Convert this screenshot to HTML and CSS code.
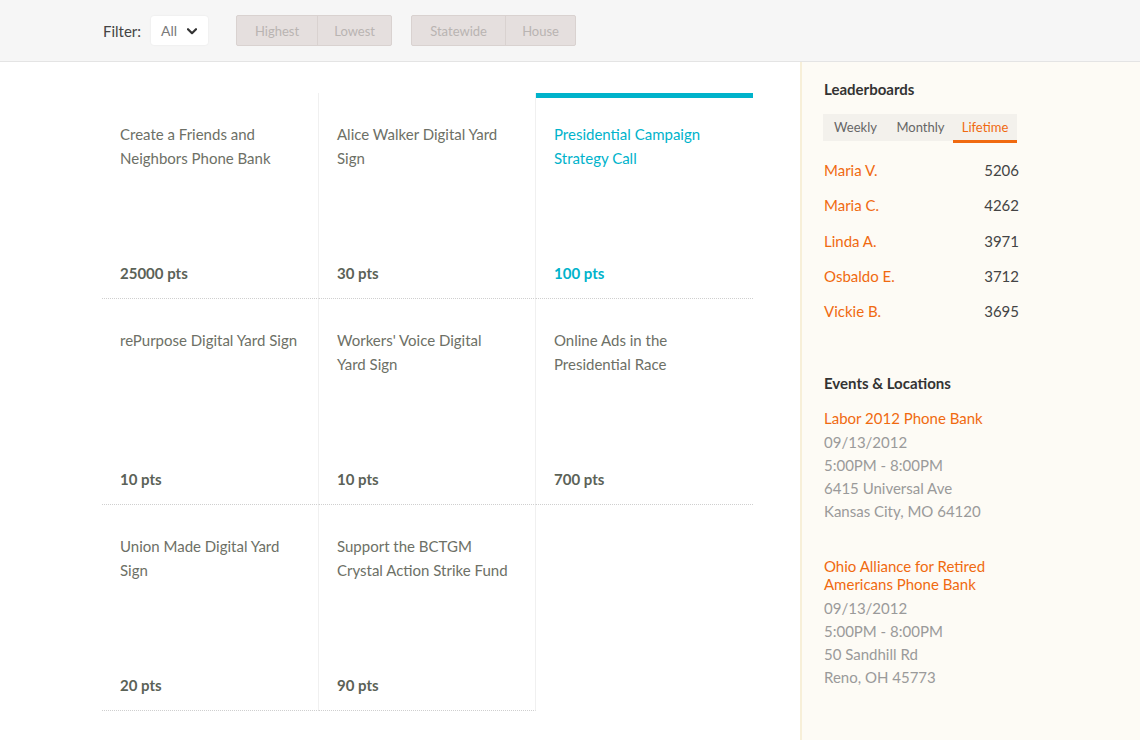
FILE: index.html
```html
<!DOCTYPE html>
<html lang="en">
<head>
<meta charset="utf-8">
<title>Actions</title>
<link rel="stylesheet" href="styles.css">
</head>
<body>
<header class="topbar">
  <span class="filter-label">Filter:</span>
  <div class="select">
    <span>All</span>
    <svg class="chev" width="10" height="7" viewBox="0 0 10 7"><path d="M1 1.2 L5 5.2 L9 1.2" fill="none" stroke="#333" stroke-width="2.2" stroke-linecap="round" stroke-linejoin="round"/></svg>
  </div>
  <div class="btn-group">
    <span class="btn w81">Highest</span>
    <span class="btn w75">Lowest</span>
  </div>
  <div class="btn-group">
    <span class="btn w94">Statewide</span>
    <span class="btn w71">House</span>
  </div>
</header>
<div class="layout">
  <main class="main">
    <div class="grid">
      <div class="card">
        <div class="card-title">Create a Friends and Neighbors Phone Bank</div>
        <div class="card-pts">25000 pts</div>
      </div>
      <div class="card">
        <div class="card-title">Alice Walker Digital Yard Sign</div>
        <div class="card-pts">30 pts</div>
      </div>
      <div class="card active last">
        <div class="card-title">Presidential Campaign Strategy Call</div>
        <div class="card-pts">100 pts</div>
      </div>
      <div class="card">
        <div class="card-title">rePurpose Digital Yard Sign</div>
        <div class="card-pts">10 pts</div>
      </div>
      <div class="card">
        <div class="card-title">Workers' Voice Digital<br>Yard Sign</div>
        <div class="card-pts">10 pts</div>
      </div>
      <div class="card last">
        <div class="card-title">Online Ads in the Presidential Race</div>
        <div class="card-pts">700 pts</div>
      </div>
      <div class="card">
        <div class="card-title">Union Made Digital Yard Sign</div>
        <div class="card-pts">20 pts</div>
      </div>
      <div class="card">
        <div class="card-title">Support the BCTGM Crystal Action Strike Fund</div>
        <div class="card-pts">90 pts</div>
      </div>
    </div>
  </main>
  <aside class="sidebar">
    <h2 class="side-title">Leaderboards</h2>
    <div class="tabs">
      <span class="tab">Weekly</span>
      <span class="tab">Monthly</span>
      <span class="tab tab-active">Lifetime</span>
    </div>
    <ul class="leaders">
      <li><span class="name">Maria V.</span><span class="score">5206</span></li>
      <li><span class="name">Maria C.</span><span class="score">4262</span></li>
      <li><span class="name">Linda A.</span><span class="score">3971</span></li>
      <li><span class="name">Osbaldo E.</span><span class="score">3712</span></li>
      <li><span class="name">Vickie B.</span><span class="score">3695</span></li>
    </ul>
    <h2 class="side-title events-title">Events &amp; Locations</h2>
    <div class="event">
      <div class="event-name">Labor 2012 Phone Bank</div>
      <div class="event-line">09/13/2012</div>
      <div class="event-line">5:00PM - 8:00PM</div>
      <div class="event-line">6415 Universal Ave</div>
      <div class="event-line">Kansas City, MO 64120</div>
    </div>
    <div class="event">
      <div class="event-name">Ohio Alliance for Retired Americans Phone Bank</div>
      <div class="event-line">09/13/2012</div>
      <div class="event-line">5:00PM - 8:00PM</div>
      <div class="event-line">50 Sandhill Rd</div>
      <div class="event-line">Reno, OH 45773</div>
    </div>
  </aside>
</div>
</body>
</html>
```
FILE: styles.css
```css
* { box-sizing: border-box; }
html, body { margin: 0; padding: 0; }
body {
  font-family: Lato, "Open Sans", sans-serif;
  font-size: 15px;
  background: #ffffff;
  color: #444;
  width: 1140px;
  height: 740px;
  overflow: hidden;
}

.topbar {
  height: 62px;
  background: #f6f6f6;
  border-bottom: 1px solid #e4e4e4;
  display: flex;
  align-items: center;
  padding-left: 103px;
}
.filter-label {
  color: #444;
  font-size: 15px;
  margin-right: 10px;
}
.select {
  width: 57px;
  height: 29px;
  background: #fff;
  border-radius: 3px;
  box-shadow: 0 0 2px rgba(0,0,0,0.08);
  display: flex;
  align-items: center;
  padding-left: 10px;
  color: #7a7a7a;
  font-size: 14px;
  margin-right: 28px;
}
.chev { margin-left: 10px; margin-top: 1px; }
.btn-group {
  display: flex;
  height: 31px;
  background: #e5dfde;
  border: 1px solid #d9d2d0;
  border-radius: 2px;
  margin-right: 19px;
}
.btn {
  display: flex;
  align-items: center;
  justify-content: center;
  font-size: 13px;
  color: #b9b4b2;
  height: 100%;
}
.btn + .btn { border-left: 1px solid #d9d2d0; }
.w81 { width: 80px; }
.w75 { width: 74px; }
.w94 { width: 93px; }
.w71 { width: 70px; }

.layout {
  display: flex;
  height: 678px;
}
.main {
  width: 800px;
  padding: 31px 0 0 102px;
}
.grid {
  display: grid;
  grid-template-columns: repeat(3, 217px);
}
.card {
  height: 206px;
  border-bottom: 1px dotted #cfcfcf;
  border-right: 1px solid #f0f0f0;
  padding: 29px 14px 13px 18px;
  display: flex;
  flex-direction: column;
  justify-content: space-between;
}
.card.last { border-right: none; }
.card-title {
  font-size: 15px;
  line-height: 24px;
  color: #6d7066;
}
.card-pts {
  font-size: 15px;
  line-height: 24px;
  font-weight: 700;
  color: #5b6257;
}
.card.active { box-shadow: inset 0 5px 0 #00b3cb; }
.card.active .card-title,
.card.active .card-pts { color: #00b3cb; }

.sidebar {
  width: 340px;
  background: #fdfbf5;
  border-left: 2px solid #f7efd8;
  padding: 17px 0 0 22px;
}
.side-title {
  margin: 0;
  font-size: 15px;
  line-height: 20px;
  font-weight: 700;
  color: #333;
}
.tabs {
  display: flex;
  width: 194px;
  height: 27px;
  margin-top: 15px;
  margin-left: -1px;
  background: #f3f1ec;
}
.tab {
  width: 65px;
  height: 27px;
  line-height: 27px;
  text-align: center;
  font-size: 13px;
  color: #666;
}
.tab-active {
  width: 64px;
  height: 29px;
  line-height: 26px;
  color: #f06a10;
  border-bottom: 3px solid #f06a10;
}
.leaders {
  list-style: none;
  margin: 12px 0 0 0;
  padding: 0;
  width: 195px;
}
.leaders li {
  display: flex;
  justify-content: space-between;
  height: 35.3px;
  line-height: 35px;
  font-size: 15px;
}
.name { color: #f06a10; }
.score { color: #444; }

.events-title { margin-top: 44px; }
.event { margin-top: 16px; width: 200px; }
.event + .event { margin-top: 34px; }
.event-name {
  color: #f06a10;
  font-size: 15px;
  line-height: 18px;
  margin-bottom: 4px;
}
.event-line {
  color: #9a9a9a;
  font-size: 15px;
  line-height: 23px;
}
```
